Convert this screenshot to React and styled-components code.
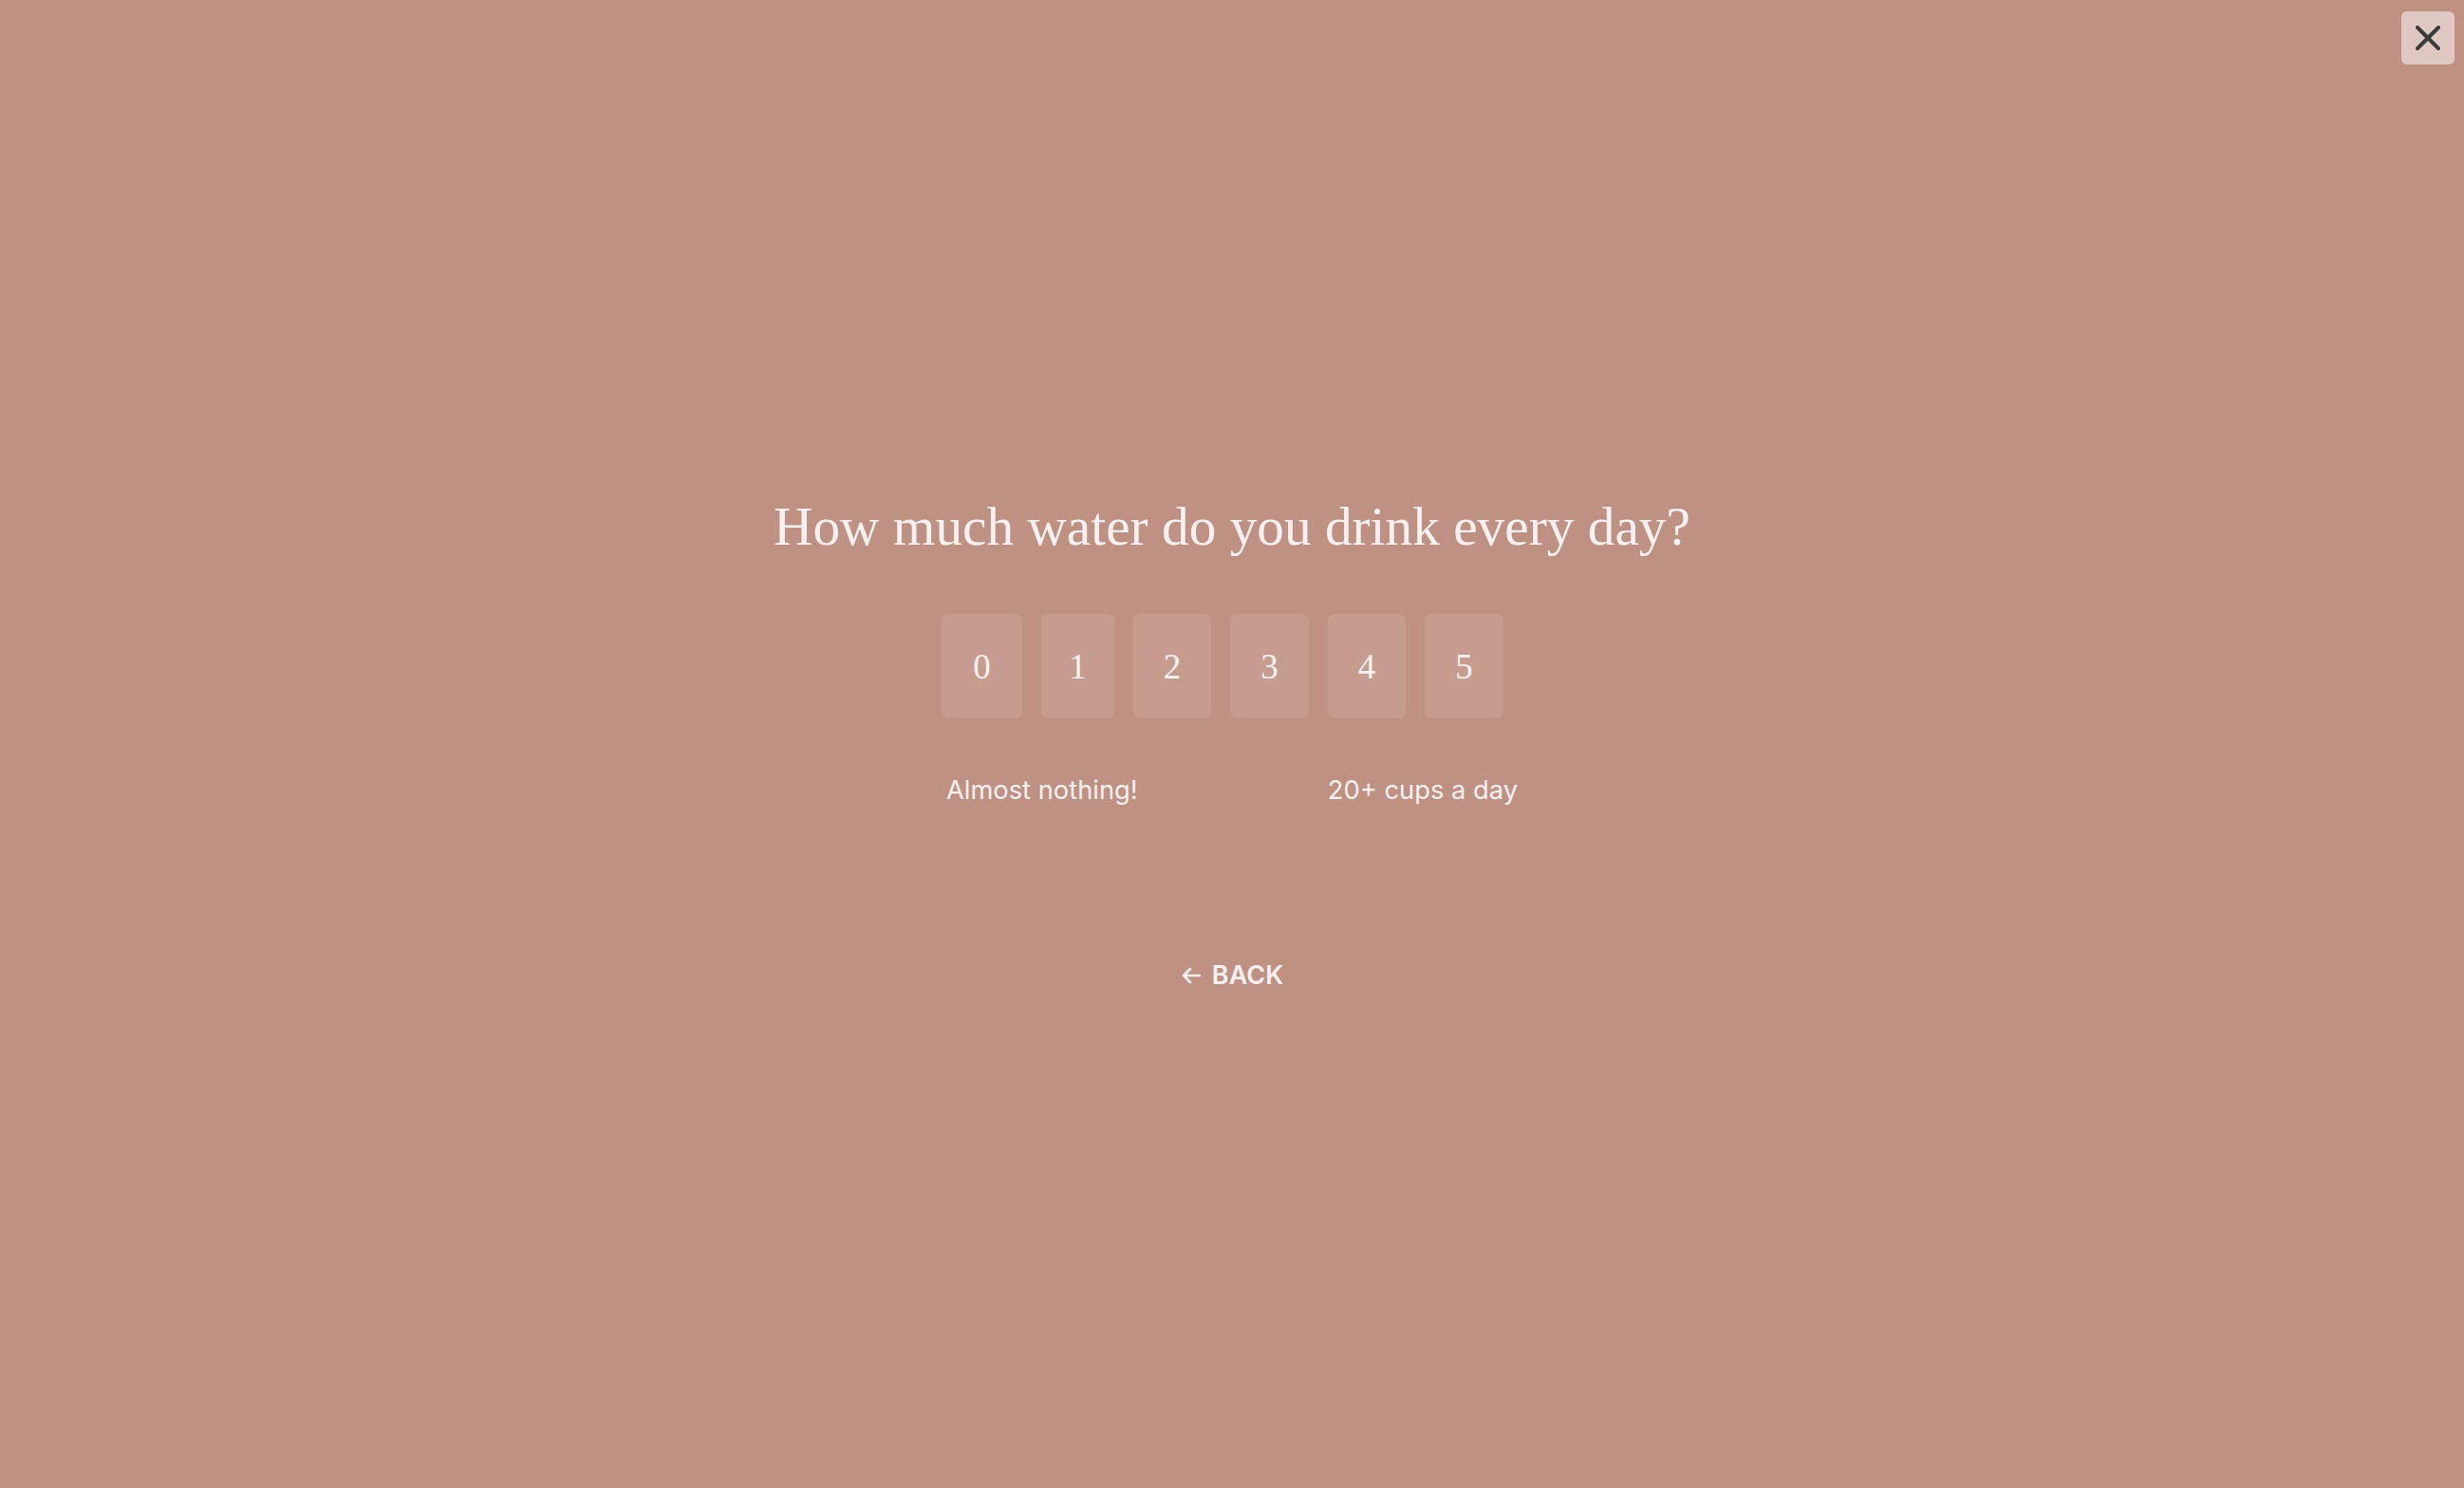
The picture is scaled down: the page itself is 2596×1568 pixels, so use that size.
import React from "react";
import styled, { createGlobalStyle } from "styled-components";

const Global = createGlobalStyle`
  html, body { margin: 0; padding: 0; }
  body { background: #bf9182; }
  #root { min-height: 100vh; }
`;

const Page = styled.main`
  position: relative;
  min-height: 100vh;
  background: #bf9182;
  display: flex;
  align-items: center;
  justify-content: center;
  color: #f7f2f1;
`;

const CloseButton = styled.button`
  position: absolute;
  top: 12px;
  right: 10px;
  width: 56px;
  height: 56px;
  border: 0;
  border-radius: 6px;
  background: rgba(255, 255, 255, 0.5);
  display: flex;
  align-items: center;
  justify-content: center;
  padding: 0;
  cursor: pointer;
`;

const Question = styled.section`
  display: flex;
  flex-direction: column;
  align-items: center;
  margin-bottom: 3px;
`;

const Title = styled.h1`
  margin: 0;
  font-family: "Liberation Serif", "DejaVu Serif", serif;
  font-weight: 400;
  font-size: 57.3px;
  line-height: 67px;
  color: #f7f2f1;
`;

const Scale = styled.div`
  display: flex;
  gap: 20px;
  margin-top: 59px;
  margin-right: 20px;
`;

const Option = styled.button`
  width: ${(p) => p.$w}px;
  height: 110px;
  border: 0;
  border-radius: 7px;
  background: rgba(255, 255, 255, 0.1);
  color: #f7f2f1;
  font-family: "Liberation Serif", "DejaVu Serif", serif;
  font-size: 37px;
  display: flex;
  align-items: center;
  justify-content: center;
  padding: 0;
  cursor: pointer;
`;

const Labels = styled.div`
  width: 602px;
  display: flex;
  justify-content: space-between;
  margin-top: 60px;
  font-family: Inter, "Noto Sans", sans-serif;
  font-size: 27.3px;
  line-height: 32px;
`;

const Label = styled.span``;

const BackButton = styled.button`
  margin-top: 163px;
  border: 0;
  background: transparent;
  color: #f7f2f1;
  font-family: Inter, "Noto Sans", sans-serif;
  font-weight: 600;
  font-size: 27px;
  line-height: 32px;
  display: flex;
  align-items: center;
  gap: 11px;
  padding: 0;
  cursor: pointer;
`;

const options = [
  { v: "0", w: 85 },
  { v: "1", w: 77 },
  { v: "2", w: 82 },
  { v: "3", w: 83 },
  { v: "4", w: 82 },
  { v: "5", w: 83 },
];

export default function App() {
  return (
    <>
      <Global />
      <Page>
        <CloseButton aria-label="Close">
          <svg width="26" height="26" viewBox="0 0 26 26">
            <path
              d="M2 2 L24 24 M24 2 L2 24"
              stroke="#3b3b3b"
              strokeWidth="4"
              strokeLinecap="round"
            />
          </svg>
        </CloseButton>
        <Question>
          <Title>How much water do you drink every day?</Title>
          <Scale>
            {options.map((o) => (
              <Option key={o.v} $w={o.w}>
                {o.v}
              </Option>
            ))}
          </Scale>
          <Labels>
            <Label>Almost nothing!</Label>
            <Label>20+ cups a day</Label>
          </Labels>
          <BackButton>
            <svg width="22" height="20" viewBox="0 0 22 20">
              <path
                d="M20 10 H3 M10 3 L3 10 L10 17"
                fill="none"
                stroke="#f7f2f1"
                strokeWidth="2.6"
                strokeLinecap="round"
                strokeLinejoin="round"
              />
            </svg>
            BACK
          </BackButton>
        </Question>
      </Page>
    </>
  );
}
